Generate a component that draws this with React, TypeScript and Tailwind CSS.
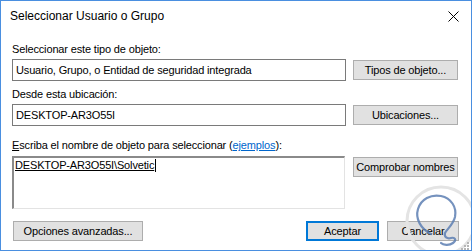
import React from 'react';

const Btn: React.FC<{ label: string; className?: string; focused?: boolean }> = ({ label, className = '', focused }) => (
  <div
    className={`flex items-center justify-center bg-[#e1e1e1] text-black ${
      focused ? 'border-2 border-[#0078d7]' : 'border border-[#adadad]'
    } ${className}`}
  >
    {label}
  </div>
);

const Watermark = () => (
  <svg className="absolute left-[400px] top-[178px]" width="72" height="73" viewBox="0 0 72 73">
    <circle cx="40" cy="42" r="34" fill="none" stroke="#e4e4e4" strokeWidth="3" />
    <path
      d="M30 55 C20 50 14 40 17 30 C20 20 30 15 40 17 C50 19 56 28 54 38 C52 46 46 50 44 54 C43 58 46 60 50 59 C54 58 56 61 52 64 C48 67 42 66 40 64"
      fill="none"
      stroke="#5d7fb3"
      strokeWidth="2.2"
      strokeLinecap="round"
      opacity="0.85"
    />
    <g fill="#b5b5b5">
      <rect x="66" y="63" width="2" height="2" />
      <rect x="63" y="66" width="2" height="2" />
      <rect x="66" y="66" width="2" height="2" />
      <rect x="60" y="69" width="2" height="2" />
      <rect x="63" y="69" width="2" height="2" />
      <rect x="66" y="69" width="2" height="2" />
    </g>
  </svg>
);

export default function App() {
  return (
    <div className="relative w-[472px] h-[251px] bg-white border border-[#4a8fe0] overflow-hidden text-[11px] leading-[13px] tracking-[-0.15px] text-black font-['Liberation_Sans',Arial,sans-serif]">
      <div className="flex items-center justify-between h-[30px] pl-[9px] pr-[12px]">
        <span className="text-[12px] tracking-normal">Seleccionar Usuario o Grupo</span>
        <svg width="11" height="11" viewBox="0 0 11 11">
          <path d="M0.5 0.5 L10.5 10.5 M10.5 0.5 L0.5 10.5" stroke="#000" strokeWidth="1" />
        </svg>
      </div>

      <div className="flex flex-col pl-[11px] pr-[12px] pt-[12px]">
        <div>Seleccionar este tipo de objeto:</div>
        <div className="flex gap-[7px] mt-[3px]">
          <div className="w-[334px] h-[22px] border border-[#7a7a7a] flex items-center pl-[3px]">
            Usuario, Grupo, o Entidad de seguridad integrada
          </div>
          <Btn label="Tipos de objeto..." className="w-[105px] h-[20px] mt-[1px]" />
        </div>

        <div className="mt-[7px]">Desde esta ubicación:</div>
        <div className="flex gap-[7px] mt-[3px]">
          <div className="w-[334px] h-[22px] border border-[#7a7a7a] flex items-center pl-[3px]">
            DESKTOP-AR3O55I
          </div>
          <Btn label="Ubicaciones..." className="w-[105px] h-[20px] mt-[1px]" />
        </div>

        <div className="mt-[13px]">
          <span className="underline">E</span>scriba el nombre de objeto para seleccionar (<span className="text-[#0066cc] underline">ejemplos</span>):
        </div>
        <div className="flex gap-[8px] mt-[4px]">
          <div className="w-[333px] h-[53px] border-t-2 border-l-2 border-t-[#8a8a8a] border-l-[#8a8a8a] border-b border-r border-b-[#e3e3e3] border-r-[#e3e3e3] pl-[1px] pt-[1px]">
            <span className="underline">DESKTOP-AR3O55I\Solvetic</span>
            <span className="inline-block w-px h-[13px] bg-black align-top ml-px" />
          </div>
          <Btn label="Comprobar nombres" className="w-[105px] h-[20px] mt-[1px]" />
        </div>

        <div className="flex items-center mt-[12px]">
          <Btn label="Opciones avanzadas..." className="w-[130px] h-[20px] ml-px" />
          <div className="flex-1" />
          <Btn label="Aceptar" focused className="w-[73px] h-[20px]" />
          <Btn label="Cancelar" className="w-[72px] h-[20px] ml-[8px]" />
        </div>
      </div>

      <Watermark />
    </div>
  );
}
